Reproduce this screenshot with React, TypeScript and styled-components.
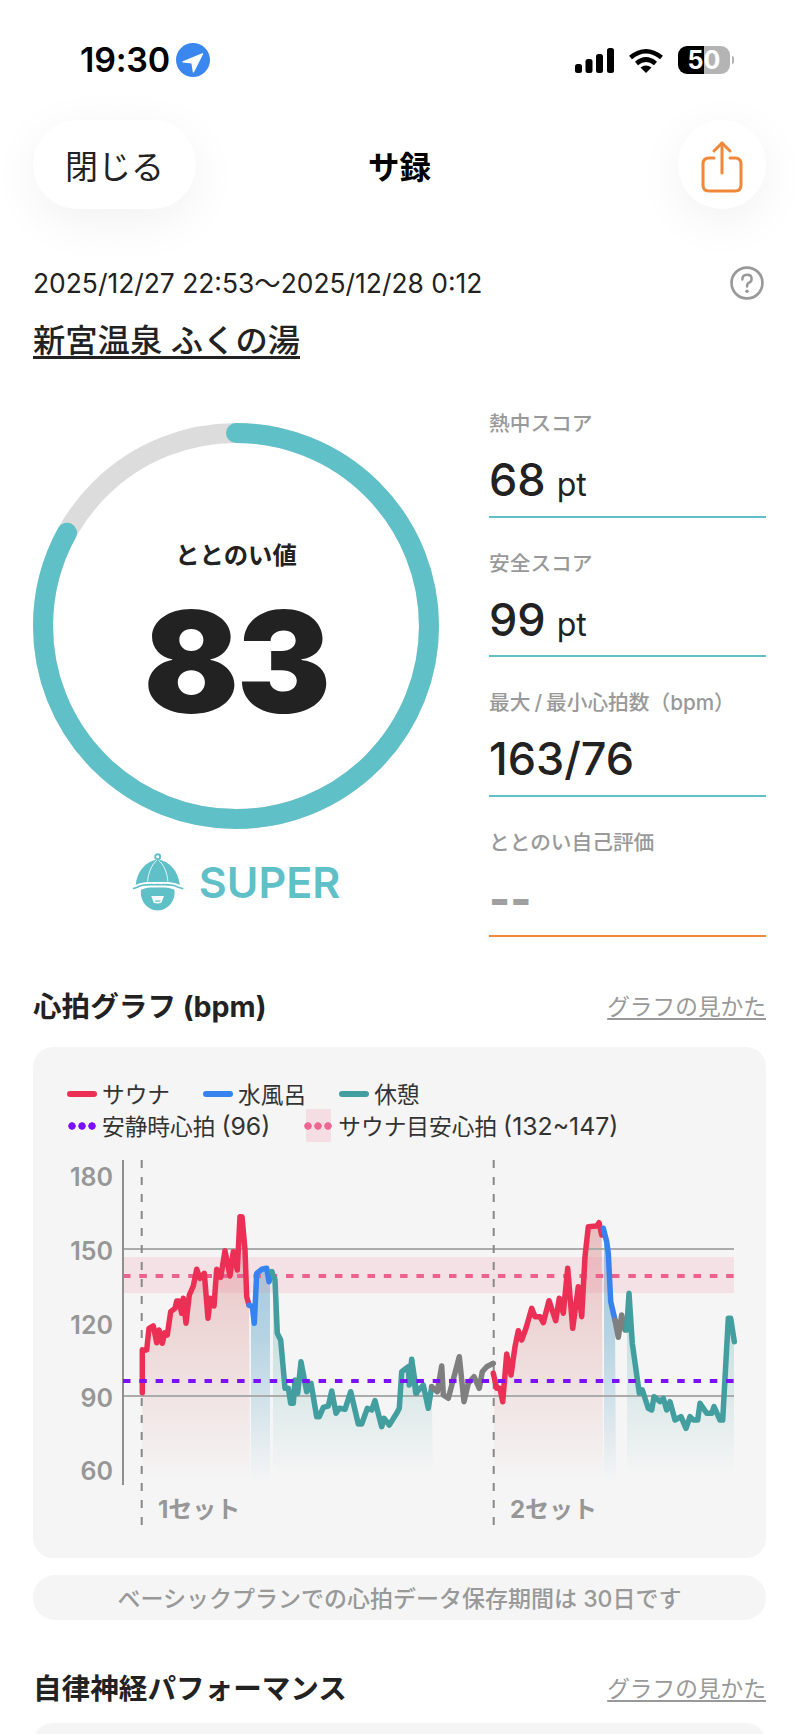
import * as React from 'react';
import styled, { createGlobalStyle } from 'styled-components';

const TEAL = '#5FC0C8';
const GRAY_TEXT = '#999999';
const INK = '#222222';

const GlobalStyle = createGlobalStyle`
  html, body {
    margin: 0;
    padding: 0;
    background: #fff;
  }
  body {
    font-family: Inter, "Noto Sans CJK JP", sans-serif;
    color: ${INK};
  }
`;

const Page = styled.div`
  width: 800px;
  height: 1734px;
  overflow: hidden;
  box-sizing: border-box;
  padding: 0 34px 0 33px;
  background: #fff;
`;

const StatusBar = styled.div`
  display: flex;
  align-items: center;
  justify-content: space-between;
  height: 120px;
  padding: 0 36px 0 47px;
`;

const StatusLeft = styled.div`
  display: flex;
  align-items: center;
  gap: 6px;
`;

const Clock = styled.span`
  font-size: 34px;
  font-weight: 600;
  line-height: 40px;
  color: #000;
  letter-spacing: -0.2px;
`;

const StatusRight = styled.div`
  display: flex;
  align-items: center;
  gap: 15px;
`;

const Battery = styled.div`
  position: relative;
  width: 52px;
  height: 28px;
  border-radius: 9px;
  background: linear-gradient(90deg, #000 50%, #b4b4b4 50%);
  color: #fff;
  font-size: 25px;
  font-weight: 700;
  line-height: 28px;
  text-align: center;

  &::after {
    content: '';
    position: absolute;
    right: -4px;
    top: 10px;
    width: 2px;
    height: 8px;
    border-radius: 0 2px 2px 0;
    background: #b4b4b4;
  }
`;

const Header = styled.header`
  display: grid;
  grid-template-columns: 1fr auto 1fr;
  align-items: center;
  height: 89px;
`;

const CloseButton = styled.div`
  justify-self: start;
  display: flex;
  align-items: center;
  justify-content: center;
  width: 163px;
  height: 89px;
  border-radius: 44px;
  background: #fff;
  box-shadow: 0 12px 50px rgba(0, 0, 0, 0.06);
  font-size: 33px;
  color: #222;
`;

const Title = styled.h1`
  margin: 0;
  font-size: 31.5px;
  font-weight: 700;
  color: #000;
`;

const ShareButton = styled.div`
  justify-self: end;
  box-sizing: border-box;
  display: flex;
  align-items: center;
  justify-content: center;
  width: 88px;
  height: 89px;
  padding-top: 4px;
  border-radius: 50%;
  background: #fff;
  box-shadow: 0 12px 50px rgba(0, 0, 0, 0.06);
`;

const DateRow = styled.div`
  display: flex;
  align-items: center;
  justify-content: space-between;
  margin-top: 57px;
  padding-right: 2px;
  height: 34px;
`;

const DateText = styled.span`
  font-size: 26.4px;
  line-height: 34px;
  color: #222;
`;

const Venue = styled.div`
  display: table;
  margin-top: 27px;
  font-size: 32.3px;
  font-weight: 500;
  line-height: 28px;
  padding-bottom: 1px;
  border-bottom: 3px solid #222;
`;

const Summary = styled.section`
  display: flex;
  justify-content: space-between;
  margin-top: 19px;
`;

const GaugeColumn = styled.div`
  display: flex;
  flex-direction: column;
  align-items: center;
  width: 406px;
  padding-top: 45px;
`;

const Gauge = styled.div`
  position: relative;
  width: 406px;
  height: 406px;
`;

const GaugeCenter = styled.div`
  position: absolute;
  inset: 0;
  display: flex;
  flex-direction: column;
  align-items: center;
`;

const GaugeLabel = styled.div`
  margin-top: 116px;
  font-size: 24.4px;
  font-weight: 600;
  line-height: 32px;
`;

const GaugeValue = styled.div`
  margin-top: 11px;
  font-size: 141px;
  font-weight: 900;
  line-height: 160px;
  letter-spacing: -2.5px;
`;

const Rank = styled.div`
  display: flex;
  align-items: center;
  gap: 15px;
  margin-top: 24px;
`;

const RankText = styled.span`
  font-size: 43px;
  font-weight: 600;
  line-height: 56px;
  color: ${TEAL};
`;

const StatColumn = styled.div`
  display: flex;
  flex-direction: column;
  width: 277px;
`;

const Stat = styled.div<{ $accent: string }>`
  box-sizing: border-box;
  height: 139.7px;
  padding-top: 32px;
  border-bottom: 2px solid ${(p) => p.$accent};
`;

const StatLabel = styled.div`
  font-size: 20.7px;
  font-weight: 500;
  line-height: 28px;
  color: ${GRAY_TEXT};
`;

const LabelSlash = styled.span`
  margin: 0 4px;
`;

const StatValue = styled.div<{ $muted?: boolean }>`
  margin-top: 15px;
  font-size: 45px;
  font-weight: ${(p) => (p.$muted ? 800 : 550)};
  line-height: 54px;
  color: ${(p) => (p.$muted ? '#a0a0a0' : INK)};
`;

const StatUnit = styled.span`
  margin-left: 11px;
  font-size: 32px;
  font-weight: 400;
`;

const SectionHead = styled.div<{ $top: number; $bottom: number }>`
  display: flex;
  align-items: center;
  justify-content: space-between;
  height: 42px;
  margin-top: ${(p) => p.$top}px;
  margin-bottom: ${(p) => p.$bottom}px;
`;

const SectionTitle = styled.h2`
  margin: 0;
  font-size: 28.6px;
  font-weight: 700;
  line-height: 42px;
`;

const GuideLink = styled.span`
  font-size: 22.7px;
  line-height: 32px;
  color: ${GRAY_TEXT};
  text-decoration: underline;
  text-underline-offset: 3px;
`;

const Card = styled.div`
  box-sizing: border-box;
  height: 511px;
  padding: 31px 0 23px;
  border-radius: 20px;
  background: #f5f5f5;
`;

const CardStub = styled(Card)`
  height: 80px;
`;

const LegendRow = styled.div<{ $gap: number }>`
  display: flex;
  align-items: center;
  gap: ${(p) => p.$gap}px;
  height: 32px;
  padding-left: 34px;
  font-size: 22.7px;
  color: #333;
`;

const LegendItem = styled.div`
  display: flex;
  align-items: center;
  gap: 5px;
  white-space: nowrap;
`;

const LegendNumber = styled.span`
  margin-left: 6px;
  font-size: 24.8px;
`;

const LineSwatch = styled.span<{ $color: string }>`
  width: 30px;
  height: 6px;
  border-radius: 3px;
  background: ${(p) => p.$color};
`;

const DotSwatch = styled.span<{ $color: string; $band?: boolean }>`
  position: relative;
  width: 30px;
  height: 8px;
  background: radial-gradient(circle, ${(p) => p.$color} 3.4px, transparent 4px) 0 0 / 10px 8px;

  ${(p) =>
    p.$band &&
    `&::before {
      content: '';
      position: absolute;
      left: 3px;
      top: -13px;
      width: 25px;
      height: 33px;
      background: rgba(238, 130, 160, 0.2);
    }`}
`;

const ChartSvg = styled.svg`
  display: block;
  width: 733px;
  height: 385px;
  margin-top: 8px;
`;

const AxisText = styled.text`
  font-family: Inter, "Noto Sans CJK JP", sans-serif;
  font-size: 25px;
  font-weight: 600;
  fill: #979797;
`;

const SetText = styled.text`
  font-family: Inter, "Noto Sans CJK JP", sans-serif;
  font-size: 24px;
  font-weight: 700;
  fill: #979797;
`;

const Notice = styled.div`
  display: flex;
  align-items: center;
  justify-content: center;
  height: 45px;
  margin-top: 17px;
  border-radius: 22px;
  background: #f5f5f5;
  font-size: 23px;
  font-weight: 500;
  color: ${GRAY_TEXT};
`;

type Pt = [number, number];

// traced from the chart at 3x, then moved to page pixels
const left = (xs: number[]): Pt[] => {
  const out: Pt[] = [];
  for (let i = 0; i < xs.length; i += 2) out.push([30 + xs[i] / 3, 1200 + xs[i + 1] / 3]);
  return out;
};
const right = (xs: number[]): Pt[] => left(xs).map(([x, y]) => [x + 370, y]);

const red1 = left([337, 578, 337, 450, 350, 450, 357, 385, 370, 378, 380, 428, 387, 390, 397, 430, 404, 398, 412, 405, 422, 335, 435, 325, 440, 303, 447, 303, 455, 340, 460, 295, 468, 370, 478, 285, 490, 258, 500, 208, 510, 235, 523, 220, 534, 355, 541, 295, 552, 318, 560, 208, 572, 232, 585, 152, 600, 228, 610, 155, 622, 210, 630, 50, 636, 50, 645, 150, 650, 290, 657, 315]);
const blue1 = left([657, 315, 667, 320, 673, 370, 680, 220, 695, 208, 710, 205, 717, 245, 725, 215]);
const teal1 = [
  ...left([725, 215, 735, 240, 742, 400, 752, 420, 765, 565, 775, 565, 782, 610, 790, 610, 795, 540, 803, 580, 813, 485, 830, 575, 843, 550, 860, 650, 868, 650, 880, 622, 895, 618, 905, 573, 918, 640, 928, 625, 945, 628, 962, 575, 985, 672, 995, 672, 1012, 625, 1025, 630, 1035, 602, 1055, 680, 1062, 655, 1078, 675, 1100, 640, 1108, 625, 1115, 515, 1135, 500, 1138, 555, 1145, 478, 1160, 580]),
  ...right([35, 478, 47, 580, 70, 555, 85, 625, 95, 560]),
];
const gray1 = right([95, 560, 112, 575, 125, 498, 130, 585, 145, 595, 178, 470, 192, 605, 205, 550, 222, 530, 238, 565, 247, 515, 260, 500, 280, 490]);
const red2 = right([280, 520, 290, 565, 300, 565, 308, 605, 320, 462, 333, 525, 345, 440, 355, 392, 365, 420, 378, 385, 395, 325, 405, 350, 420, 350, 430, 368, 447, 302, 467, 362, 478, 295, 490, 340, 503, 205, 518, 385, 535, 260, 545, 350, 555, 170, 565, 80, 590, 78, 597, 68, 605, 105]);
const blue2 = right([610, 85, 620, 125, 625, 160, 632, 305, 645, 360]);
const gray2 = right([645, 360, 655, 412, 665, 345, 675, 390]);
const teal2 = right([680, 390, 687, 280, 697, 430, 718, 580, 727, 570, 745, 625, 755, 630, 762, 590, 780, 605, 790, 595, 800, 630, 810, 605, 825, 660, 843, 650, 858, 685, 870, 650, 880, 660, 893, 660, 900, 610, 920, 640, 935, 640, 942, 620, 960, 660, 968, 660, 985, 355, 992, 355, 1003, 425]);

const linePoints = (pts: Pt[]) => pts.map(([x, y]) => `${x.toFixed(1)},${y.toFixed(1)}`).join(' ');

const areaPoints = (pts: Pt[], x0: number, x1: number) => {
  const clamped = pts.map(([x, y]): Pt => [Math.min(x1, Math.max(x0, x)), y]);
  return linePoints([[x0, 1482], ...clamped, [x1, 1482]]);
};

const segments = [
  { pts: red1, color: '#EC2F55' },
  { pts: blue1, color: '#3683F0' },
  { pts: teal1, color: '#429E9F' },
  { pts: gray1, color: '#7F7F7F' },
  { pts: red2, color: '#EC2F55' },
  { pts: blue2, color: '#3683F0' },
  { pts: gray2, color: '#7F7F7F' },
  { pts: teal2, color: '#429E9F' },
];

const HeartChart = () => (
  <ChartSvg viewBox="33 1150 733 385">
    <defs>
      <linearGradient id="areaRed" gradientUnits="userSpaceOnUse" x1="0" y1="1220" x2="0" y2="1482">
        <stop offset="0" stopColor="#C83C3C" stopOpacity="0.3" />
        <stop offset="0.3" stopColor="#C83C3C" stopOpacity="0.2" />
        <stop offset="1" stopColor="#C83C3C" stopOpacity="0" />
      </linearGradient>
      <linearGradient id="areaBlue" gradientUnits="userSpaceOnUse" x1="0" y1="1240" x2="0" y2="1482">
        <stop offset="0" stopColor="#5FA4C8" stopOpacity="0.55" />
        <stop offset="0.4" stopColor="#5FA4C8" stopOpacity="0.42" />
        <stop offset="1" stopColor="#5FA4C8" stopOpacity="0" />
      </linearGradient>
      <linearGradient id="areaTeal" gradientUnits="userSpaceOnUse" x1="0" y1="1300" x2="0" y2="1475">
        <stop offset="0" stopColor="#429E9F" stopOpacity="0.3" />
        <stop offset="1" stopColor="#429E9F" stopOpacity="0" />
      </linearGradient>
    </defs>

    {[
      ['180', 1175],
      ['150', 1249],
      ['120', 1323],
      ['90', 1396],
      ['60', 1469],
    ].map(([label, y]) => (
      <AxisText key={label} x="113" y={Number(y) + 10.5} textAnchor="end">
        {label}
      </AxisText>
    ))}

    <polygon points={areaPoints(red1, 142, 250)} fill="url(#areaRed)" />
    <polygon points={areaPoints(blue1, 251, 270)} fill="url(#areaBlue)" />
    <polygon points={areaPoints(teal1, 273, 433)} fill="url(#areaTeal)" />
    <polygon points={areaPoints(red2, 494, 603)} fill="url(#areaRed)" />
    <polygon points={areaPoints(blue2, 604, 616)} fill="url(#areaBlue)" />
    <polygon points={areaPoints(teal2, 627, 734)} fill="url(#areaTeal)" />

    <rect x="123" y="1257" width="611" height="36" fill="#EE82A0" fillOpacity="0.17" />
    <line x1="123" y1="1249" x2="734" y2="1249" stroke="#ABABAB" strokeWidth="2" />
    <line x1="123" y1="1396" x2="734" y2="1396" stroke="#ABABAB" strokeWidth="2" />
    <line x1="123" y1="1160" x2="123" y2="1485" stroke="#8F8F8F" strokeWidth="2" />
    <line x1="141.7" y1="1160" x2="141.7" y2="1527" stroke="#888" strokeWidth="2" strokeDasharray="8 9" />
    <line x1="493.7" y1="1160" x2="493.7" y2="1527" stroke="#888" strokeWidth="2" strokeDasharray="8 9" />
    <line x1="123" y1="1276" x2="734" y2="1276" stroke="#EE6090" strokeWidth="4" strokeDasharray="7.5 8.8" />

    {segments.map((s, i) => (
      <polyline
        key={i}
        points={linePoints(s.pts)}
        fill="none"
        stroke={s.color}
        strokeWidth="5.5"
        strokeLinejoin="round"
        strokeLinecap="round"
      />
    ))}

    <line x1="123" y1="1381" x2="734" y2="1381" stroke="#7B10FF" strokeWidth="4" strokeDasharray="7.5 8.8" />

    <SetText x="158" y="1518">1セット</SetText>
    <SetText x="510" y="1518">2セット</SetText>
  </ChartSvg>
);

const LocationBadge = () => (
  <svg width="34" height="34" viewBox="0 0 36 36">
    <circle cx="18" cy="18" r="18" fill="#3B87F0" />
    <path d="M28 11.5 L7.5 20 L17 21 L18.5 30.5 Z" fill="#fff" stroke="#fff" strokeWidth="1.5" strokeLinejoin="round" />
  </svg>
);

const SignalIcon = () => (
  <svg width="39" height="25" viewBox="0 0 39 25" fill="#000">
    <rect x="0" y="16" width="7" height="9" rx="2.5" />
    <rect x="10.5" y="11" width="7" height="14" rx="2.5" />
    <rect x="21" y="6" width="7" height="19" rx="2.5" />
    <rect x="32" y="0" width="7" height="25" rx="2.5" />
  </svg>
);

const WifiIcon = () => (
  <svg width="34" height="25" viewBox="0 0 34 25" fill="none" stroke="#000" strokeWidth="4.6">
    <path d="M1.5 9.5 Q17 -3 32.5 9.5" />
    <path d="M7.5 15.5 Q17 7.5 26.5 15.5" />
    <path d="M11.5 19.5 Q17 15.5 22.5 19.5 L17 25 Z" fill="#000" stroke="none" />
  </svg>
);

const ShareIcon = () => (
  <svg width="44" height="54" viewBox="0 0 44 54" fill="none" stroke="#F0883A" strokeWidth="3" strokeLinecap="round" strokeLinejoin="round">
    <path d="M14 18 H9 Q3 18 3 24 V45 Q3 51 9 51 H35 Q41 51 41 45 V24 Q41 18 35 18 H30" />
    <path d="M22 33 V3" />
    <path d="M14 11 L22 3 L30 11" />
  </svg>
);

const HelpIcon = () => (
  <svg width="34" height="34" viewBox="0 0 33 33">
    <circle cx="16.5" cy="16.5" r="15" fill="none" stroke="#999" strokeWidth="2.6" />
    <path d="M12 13 Q12 8.5 16.5 8.5 Q21 8.5 21 12.5 Q21 15 18.5 16.2 Q16.5 17.2 16.5 20" fill="none" stroke="#999" strokeWidth="2.4" strokeLinecap="round" />
    <circle cx="16.5" cy="24.5" r="1.7" fill="#999" />
  </svg>
);

const RingGauge = ({ value }: { value: number }) => {
  const r = 193;
  const circumference = 2 * Math.PI * r;
  return (
    <svg width="406" height="406" viewBox="0 0 406 406">
      <circle cx="203" cy="203" r={r} fill="none" stroke="#DCDCDC" strokeWidth="20" />
      <circle
        cx="203"
        cy="203"
        r={r}
        fill="none"
        stroke={TEAL}
        strokeWidth="20"
        strokeLinecap="round"
        strokeDasharray={`${(circumference * value) / 100} ${circumference}`}
        transform="rotate(-90 203 203)"
      />
    </svg>
  );
};

const HatIcon = () => (
  <svg width="52" height="58" viewBox="0 0 50 56">
    <circle cx="24.7" cy="3.6" r="2.4" fill="none" stroke={TEAL} strokeWidth="1.8" />
    <path d="M3.5 31 C4.5 18 13 8 24.7 6 C36.5 8 45 18 46 31 C38 27 31 28.5 24.7 28 C18 28.5 11 27 3.5 31 Z" fill={TEAL} />
    <path d="M15 27.5 C15.5 19 19 11 24 7 M34.5 27.5 C34 19 30.5 11 25.5 7" fill="none" stroke="#fff" strokeWidth="0.8" />
    <path d="M0.8 34.5 L5 33 C11 29.5 18 31 24.7 30.5 C31 31 38 29.5 44.5 33 L49.5 34.5" fill="none" stroke={TEAL} strokeWidth="1.6" />
    <path d="M8.6 35.5 C15 32.6 20 33.4 24.7 33.2 C29.5 33.4 34.5 32.6 40.8 35.5 C42.5 46 34.5 55.5 24.7 55.5 C15 55.5 7 46 8.6 35.5 Z" fill={TEAL} />
    <path d="M18.5 41.5 H30.8 L28.2 48 Q24.7 49.4 21 48 Z" fill="#fff" />
    <path d="M22 46.4 H27.4" stroke={TEAL} strokeWidth="1.2" />
  </svg>
);

const stats = [
  { label: <>熱中スコア</>, value: '68', unit: 'pt' },
  { label: <>安全スコア</>, value: '99', unit: 'pt' },
  { label: <>最大<LabelSlash>/</LabelSlash>最小心拍数（bpm）</>, value: '163/76' },
];

const App = () => (
  <Page>
    <GlobalStyle />
    <StatusBar>
      <StatusLeft>
        <Clock>19:30</Clock>
        <LocationBadge />
      </StatusLeft>
      <StatusRight>
        <SignalIcon />
        <WifiIcon />
        <Battery>50</Battery>
      </StatusRight>
    </StatusBar>

    <Header>
      <CloseButton>閉じる</CloseButton>
      <Title>サ録</Title>
      <ShareButton>
        <ShareIcon />
      </ShareButton>
    </Header>

    <DateRow>
      <DateText>2025/12/27 22:53～2025/12/28 0:12</DateText>
      <HelpIcon />
    </DateRow>
    <Venue>新宮温泉 ふくの湯</Venue>

    <Summary>
      <GaugeColumn>
        <Gauge>
          <RingGauge value={83} />
          <GaugeCenter>
            <GaugeLabel>ととのい値</GaugeLabel>
            <GaugeValue>83</GaugeValue>
          </GaugeCenter>
        </Gauge>
        <Rank>
          <HatIcon />
          <RankText>SUPER</RankText>
        </Rank>
      </GaugeColumn>
      <StatColumn>
        {stats.map((s) => (
          <Stat key={s.value} $accent={TEAL}>
            <StatLabel>{s.label}</StatLabel>
            <StatValue>
              {s.value}
              {s.unit && <StatUnit>{s.unit}</StatUnit>}
            </StatValue>
          </Stat>
        ))}
        <Stat $accent="#F0883A">
          <StatLabel>ととのい自己評価</StatLabel>
          <StatValue $muted>--</StatValue>
        </Stat>
      </StatColumn>
    </Summary>

    <SectionHead $top={49} $bottom={19}>
      <SectionTitle>心拍グラフ (bpm)</SectionTitle>
      <GuideLink>グラフの見かた</GuideLink>
    </SectionHead>
    <Card>
      <LegendRow $gap={33}>
        <LegendItem>
          <LineSwatch $color="#EC2F55" />
          サウナ
        </LegendItem>
        <LegendItem>
          <LineSwatch $color="#3683F0" />
          水風呂
        </LegendItem>
        <LegendItem>
          <LineSwatch $color="#429E9F" />
          休憩
        </LegendItem>
      </LegendRow>
      <LegendRow $gap={33}>
        <LegendItem>
          <DotSwatch $color="#7B10FF" />
          <span>
            安静時心拍<LegendNumber>(96)</LegendNumber>
          </span>
        </LegendItem>
        <LegendItem>
          <DotSwatch $color="#EE6090" $band />
          <span>
            サウナ目安心拍<LegendNumber>(132~147)</LegendNumber>
          </span>
        </LegendItem>
      </LegendRow>
      <HeartChart />
    </Card>
    <Notice>ベーシックプランでの心拍データ保存期間は 30日です</Notice>

    <SectionHead $top={48} $bottom={13}>
      <SectionTitle>自律神経パフォーマンス</SectionTitle>
      <GuideLink>グラフの見かた</GuideLink>
    </SectionHead>
    <CardStub />
  </Page>
);

export default App;
